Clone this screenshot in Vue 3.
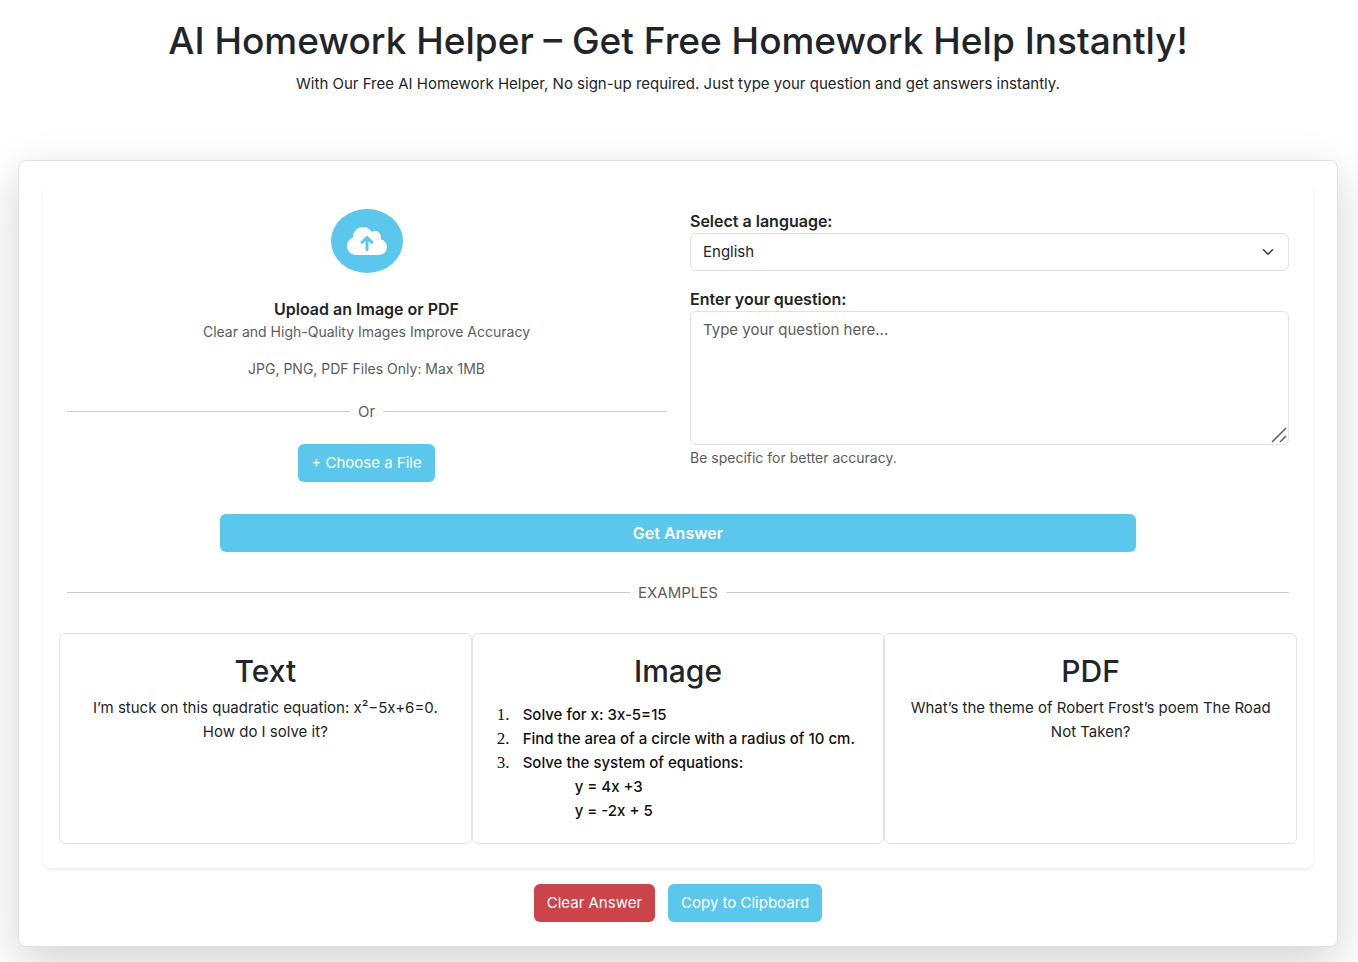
<script setup>
import { ref } from 'vue'

const language = ref('English')
const question = ref('')
</script>

<template>
  <main class="page">
    <header class="intro">
      <h1>AI Homework Helper – Get Free Homework Help Instantly!</h1>
      <p>With Our Free AI Homework Helper, No sign-up required. Just type your question and get answers instantly.</p>
    </header>

    <section class="card">
      <form class="panel" @submit.prevent>
        <div class="columns">
          <div class="upload">
            <span class="cloud">
              <svg viewBox="0 0 640 512" width="40" height="32" aria-hidden="true">
                <path fill="currentColor" d="M144 480C64.500 480 0 415.500 0 336c0-62.800 40.200-116.200 96.200-135.900c-.1-2.700-.2-5.400-.2-8.100c0-88.400 71.600-160 160-160c59.300 0 111 32.200 138.700 80.200C409.900 102 428.300 96 448 96c53 0 96 43 96 96c0 12.200-2.300 23.800-6.400 34.600C596 238.400 640 290.100 640 352c0 70.700-57.300 128-128 128H144zm79-217c-9.400 9.400-9.400 24.600 0 33.900s24.600 9.400 33.900 0l39-39V392c0 13.300 10.700 24 24 24s24-10.700 24-24V257.900l39 39c9.400 9.400 24.600 9.400 33.900 0s9.400-24.600 0-33.900l-80-80c-9.400-9.400-24.600-9.400-33.900 0l-80 80z" />
              </svg>
            </span>
            <strong>Upload an Image or PDF</strong>
            <small>Clear and High-Quality Images Improve Accuracy</small>
            <small class="formats">JPG, PNG, PDF Files Only: Max 1MB</small>
            <div class="divider">Or</div>
            <button type="button" class="btn">+ Choose a File</button>
          </div>

          <div class="fields">
            <label for="language">Select a language:</label>
            <div class="control">
              <select id="language" v-model="language">
                <option>English</option>
              </select>
              <svg class="chevron" viewBox="0 0 16 16" width="12" height="12" aria-hidden="true">
                <path d="m2 5 6 6 6-6" fill="none" stroke="#343a40" stroke-width="2" stroke-linecap="round" stroke-linejoin="round" />
              </svg>
            </div>
            <label class="question-label" for="question">Enter your question:</label>
            <div class="control">
              <textarea id="question" v-model="question" placeholder="Type your question here..."></textarea>
              <svg class="grip" viewBox="0 0 16 16" width="16" height="16" aria-hidden="true">
                <path d="M1 15 15 1M9 15l6-6" fill="none" stroke="#5f5f5f" stroke-width="1.500" />
              </svg>
            </div>
            <small class="hint">Be specific for better accuracy.</small>
          </div>
        </div>

        <button type="submit" class="btn submit">Get Answer</button>
        <div class="divider">EXAMPLES</div>

        <div class="examples">
          <article class="example">
            <h2>Text</h2>
            <p>I’m stuck on this quadratic equation: x²−5x+6=0. How do I solve it?</p>
          </article>
          <article class="example">
            <h2>Image</h2>
            <ol>
              <li>Solve for x: 3x-5=15</li>
              <li>Find the area of a circle with a radius of 10 cm.</li>
              <li>
                Solve the system of equations:
                <div class="equation">y = 4x +3</div>
                <div class="equation">y = -2x + 5</div>
              </li>
            </ol>
          </article>
          <article class="example">
            <h2>PDF</h2>
            <p>What’s the theme of Robert Frost’s poem The Road Not Taken?</p>
          </article>
        </div>
      </form>

      <div class="actions">
        <button type="button" class="btn danger">Clear Answer</button>
        <button type="button" class="btn">Copy to Clipboard</button>
      </div>
    </section>
  </main>
</template>

<style>
body {
  background: #fff;
  overflow-x: hidden;
}
</style>

<style scoped>
* {
  box-sizing: border-box;
}
.page {
  padding: 17px 20px 16px 18px;
  color: #212529;
  font: 400 15px/24px Inter, "Liberation Sans", sans-serif;
}
h1, h2, p {
  margin: 0;
}
.intro {
  text-align: center;
}
h1 {
  margin-bottom: 7px;
  font-size: 37px;
  line-height: 48px;
  font-weight: 500;
}
.card {
  max-width: 1320px;
  margin: 64px auto 0;
  padding: 24px;
  border: 1px solid #dee2e6;
  border-radius: 8px;
  background: #fff;
  box-shadow: 0 16px 48px rgba(0, 0, 0, 0.175);
}
.panel {
  padding: 24px;
  border-radius: 8px;
  box-shadow: 0 2px 4px rgba(0, 0, 0, 0.075);
}
.columns {
  display: grid;
  grid-template-columns: 1fr 1fr;
  gap: 24px;
}
.upload {
  display: flex;
  flex-direction: column;
  align-items: center;
}
.cloud {
  display: flex;
  margin-bottom: 24px;
  padding: 16px;
  border-radius: 50%;
  background: #5bc7ec;
  color: #fff;
}
small {
  font-size: 14px;
  line-height: 22px;
  color: #5a5d60;
}
.formats {
  margin: 15px 0 20px;
}
.divider {
  display: flex;
  align-items: center;
  gap: 8px;
  align-self: stretch;
  color: #5a5d60;
}
.divider::before,
.divider::after {
  content: "";
  flex: 1;
  height: 1px;
  margin-bottom: 1px;
  background: #c8c9ca;
}
.btn {
  height: 38px;
  padding: 0 12px;
  border: 1px solid transparent;
  border-radius: 6px;
  background: #5bc7ec;
  color: #fff;
  font: inherit;
  cursor: pointer;
}
.upload .btn {
  margin-top: 20px;
}
.fields {
  display: flex;
  flex-direction: column;
}
label,
strong {
  font-size: 16px;
  font-weight: 600;
}
.question-label {
  margin-top: 16px;
}
.control {
  position: relative;
  display: flex;
}
select,
textarea {
  width: 100%;
  margin: 0;
  padding: 6px 12px;
  border: 1px solid #dee2e6;
  border-radius: 6px;
  background: #fff;
  color: #212529;
  font: inherit;
}
select {
  height: 38px;
  appearance: none;
}
textarea {
  height: 134px;
  resize: none;
}
textarea::placeholder {
  color: #5a5d60;
  opacity: 1;
}
.chevron {
  position: absolute;
  right: 15px;
  top: 13px;
  pointer-events: none;
}
.grip {
  position: absolute;
  right: 2px;
  bottom: 2px;
  pointer-events: none;
}
.hint {
  margin-top: 2px;
}
.submit {
  display: block;
  width: 75%;
  margin: 32px auto 29px;
  font-size: 16px;
  font-weight: 600;
}
.examples {
  display: grid;
  grid-template-columns: repeat(3, 1fr);
  margin: 28px -8px 0;
}
.example {
  min-height: 211px;
  padding: 16px;
  border: 1px solid #dee2e6;
  border-radius: 6px;
  text-align: center;
}
h2 {
  margin-bottom: 4px;
  font-size: 30px;
  line-height: 42px;
  font-weight: 500;
}
ol {
  margin: 11px 0 0;
  padding-left: 34px;
  list-style: none;
  counter-reset: item;
  color: #111;
  font-weight: 500;
  text-align: left;
  white-space: nowrap;
}
li {
  position: relative;
  counter-increment: item;
}
li::before {
  content: counter(item) ".";
  position: absolute;
  left: -26px;
  font: 400 17px/24px "Liberation Serif", serif;
}
.equation {
  padding-left: 52px;
}
.actions {
  display: flex;
  justify-content: center;
  gap: 13px;
  margin-top: 16px;
}
.danger {
  background: #cb444a;
}
</style>
